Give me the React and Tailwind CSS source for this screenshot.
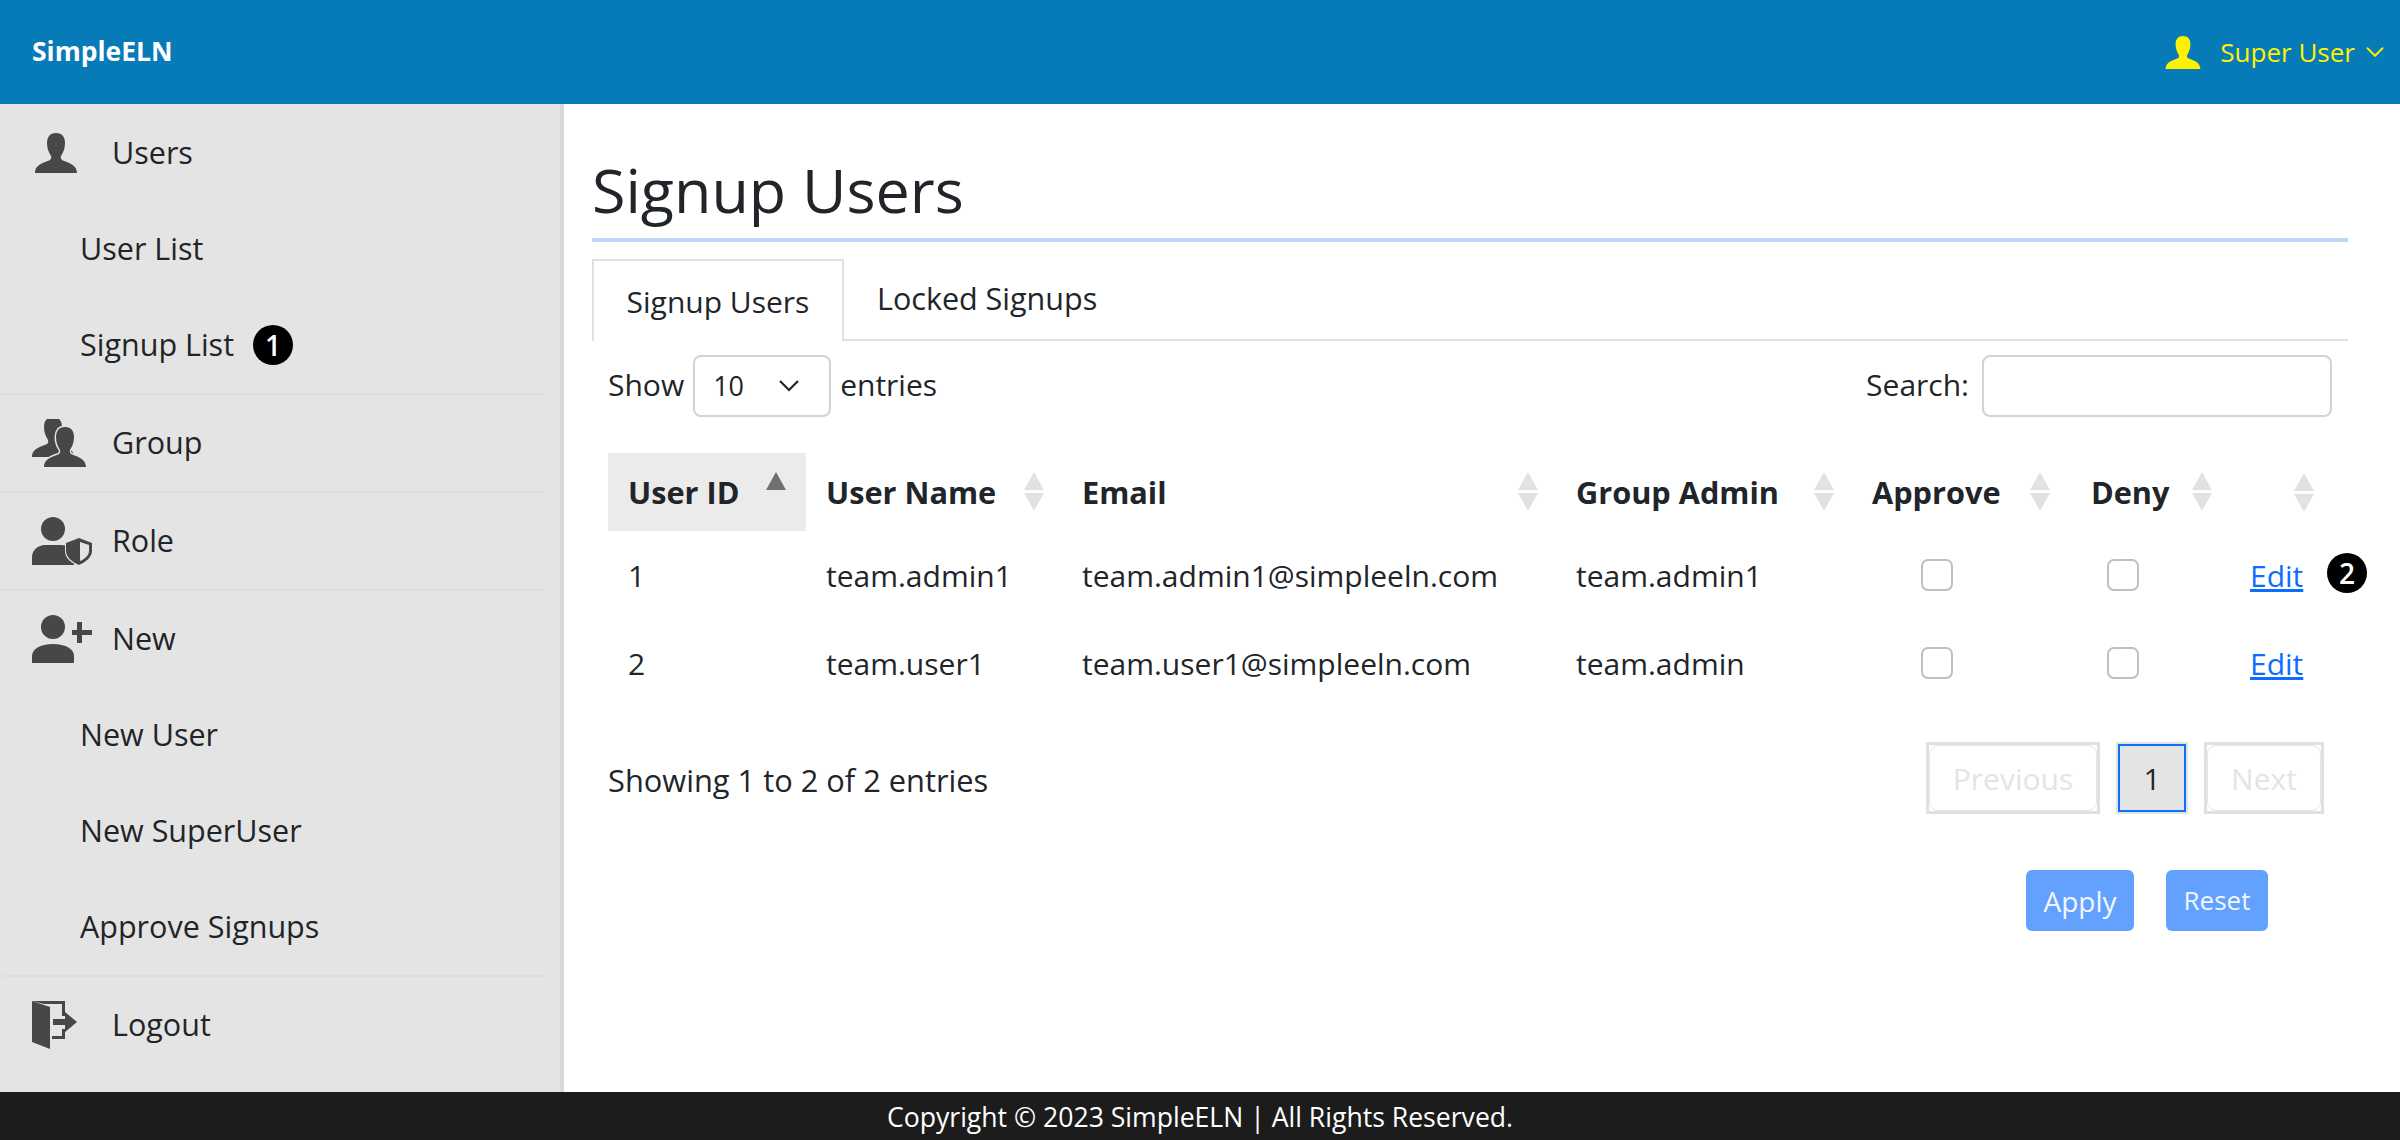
import React from 'react';
import { ChevronDown } from 'lucide-react';

const personPath = 'M21 0c-6 0-9 4-9 10 0 5 1.500 9 3.500 12 1 1.500 1 3.500 0 4.500C13 29 0 30 0 40h42c0-10-13-11-15.500-13.500-1-1-1-3 0-4.500C28.500 19 30 15 30 10 30 4 27 0 21 0z';

const PersonIcon = ({ className }) => (
  <svg viewBox="0 0 42 40" className={className} fill="currentColor">
    <path d={personPath} />
  </svg>
);

const GroupIcon = ({ className }) => (
  <svg viewBox="0 0 54 48" className={className} fill="currentColor">
    <path d={personPath} transform="translate(0 -2)" />
    <path d={personPath} transform="translate(12 8)" stroke="#e4e4e4" strokeWidth="3" paintOrder="stroke" />
  </svg>
);

const RoleIcon = ({ className }) => (
  <svg viewBox="0 0 60 48" className={className} fill="currentColor">
    <circle cx="21" cy="12" r="12" />
    <path d="M0 48v-8c0-7 6-12 13-12h16c6 0 11 3 13 8v12z" />
    <path d="M47 20l14 5v9c0 7-6 12-14 15-8-3-14-8-14-15v-9z" fill="#e4e4e4" />
    <path fillRule="evenodd" d="M47 21l13 5v8c0 6-6 11-13 14-7-3-13-8-13-14v-8zm1 4v19c5-2 9-6 9-10v-6z" />
  </svg>
);

const AddUserIcon = ({ className }) => (
  <svg viewBox="0 0 60 48" className={className} fill="currentColor">
    <circle cx="21" cy="12" r="12" />
    <path d="M0 48v-7c0-7 8-12 21-12s21 5 21 12v7z" />
    <path d="M45 7h5v8h10v5H50v8h-5v-8H40v-5h5z" />
  </svg>
);

const LogoutIcon = ({ className }) => (
  <svg viewBox="0 0 45 48" className={className} fill="currentColor">
    <path d="M0 0h33v15h-3V3H12z" />
    <path d="M0 0l18 6v42L0 41z" />
    <path d="M20 35h10v-7h3v10H20z" />
    <path d="M21 18h12v-7l12 10-12 10v-7H21z" />
  </svg>
);

const Caret = () => (
  <svg viewBox="0 0 20 12" className="w-[20px] h-[12px]" fill="none" stroke="currentColor" strokeWidth="2.200">
    <path d="M1 1l9 9 9-9" />
  </svg>
);

const SortArrows = ({ active }) => (
  <span className="flex flex-col gap-[3px]">
    <span className={`w-0 h-0 border-l-[10px] border-r-[10px] border-b-[18px] border-l-transparent border-r-transparent ${active ? 'border-b-[#707070]' : 'border-b-[#e2e2e2]'}`} />
    <span className={`w-0 h-0 border-l-[10px] border-r-[10px] border-t-[18px] border-l-transparent border-r-transparent ${active ? 'border-t-transparent' : 'border-t-[#e2e2e2]'}`} />
  </span>
);

const Badge = ({ n }) => (
  <span className="w-[40px] h-[40px] rounded-full bg-black text-white flex items-center justify-center text-[28px] font-semibold leading-none">
    {n}
  </span>
);

const MainItem = ({ icon: Icon, iconClass, label, h = 'h-[96px]' }) => (
  <div className={`${h} flex items-center`}>
    <span className="w-[112px] pl-[32px] shrink-0 text-[#474747]">
      <Icon className={iconClass} />
    </span>
    <span>{label}</span>
  </div>
);

const SubItem = ({ label, badge }) => (
  <div className="h-[96px] flex items-center pl-[80px] gap-[19px]">
    <span>{label}</span>
    {badge && <Badge n={badge} />}
  </div>
);

const Divider = () => <div className="h-[2px] w-[544px] ml-[2px] bg-[#dedede]" />;

const headers = [
  { label: 'User ID', w: 'w-[198px]', pr: 'pr-[20px]', active: true },
  { label: 'User Name', w: 'w-[256px]', pr: 'pr-[18px]' },
  { label: 'Email', w: 'w-[494px]', pr: 'pr-[18px]' },
  { label: 'Group Admin', w: 'w-[296px]', pr: 'pr-[18px]' },
  { label: 'Approve', w: 'w-[219px]', pr: 'pr-[21px]' },
  { label: 'Deny', w: 'w-[159px]', pr: 'pr-[18px]' },
  { label: '', w: 'w-[101px]', pr: 'pr-[17px]' },
];

const rows = [
  { id: 1, name: 'team.admin1', email: 'team.admin1@simpleeln.com', admin: 'team.admin1', badge: 2 },
  { id: 2, name: 'team.user1', email: 'team.user1@simpleeln.com', admin: 'team.admin' },
];

const Check = () => (
  <span className="block mx-auto w-[32px] h-[32px] rounded-[7px] border-2 border-[#bfbfbf] bg-white" />
);

const PageButton = ({ w, label }) => (
  <span className={`${w} h-[72px] border-[3px] border-[#dee0e3]`}>
    <span className="w-full h-full flex items-center justify-center rounded-[9px] border border-[#e6e7e9] text-[#e4e4e4]">
      {label}
    </span>
  </span>
);

export default function App() {
  return (
    <div className="w-[2400px] h-[1140px] flex flex-col overflow-hidden bg-white text-[#212529] text-[30px] font-['Open_Sans',sans-serif]">
      <header className="h-[104px] shrink-0 bg-[#077bb8] flex items-center justify-between pl-[32px] pr-[10px]">
        <span className="text-white font-bold text-[26.5px]">SimpleELN</span>
        <div className="flex items-center text-[#fff200] text-[26px]">
          <PersonIcon className="w-[36px] h-[33px] mr-[19px]" />
          <span>Super User</span>
          <ChevronDown className="w-[30px] h-[30px] ml-[5px]" strokeWidth={1.500} />
        </div>
      </header>

      <div className="flex-1 flex min-h-0">
        <aside className="w-[564px] shrink-0 bg-[#e4e4e4] border-r-4 border-[#d8d8d8] text-[30.5px]">
          <MainItem icon={PersonIcon} iconClass="w-[42px] h-[40px] ml-[3px]" label="Users" h="h-[97px]" />
          <SubItem label="User List" />
          <SubItem label="Signup List" badge={1} />
          <Divider />
          <MainItem icon={GroupIcon} iconClass="w-[54px] h-[48px]" label="Group" />
          <Divider />
          <MainItem icon={RoleIcon} iconClass="w-[60px] h-[48px]" label="Role" />
          <Divider />
          <MainItem icon={AddUserIcon} iconClass="w-[60px] h-[48px]" label="New" />
          <SubItem label="New User" />
          <SubItem label="New SuperUser" />
          <SubItem label="Approve Signups" />
          <Divider />
          <MainItem icon={LogoutIcon} iconClass="w-[45px] h-[48px]" label="Logout" />
        </aside>

        <main className="flex-1 pl-[28px] pr-[52px] min-w-0">
          <h1 className="text-[61px] leading-none pt-[55px] pb-[18px] border-b-4 border-[#bfd7fb]">
            Signup Users
          </h1>

          <div className="mt-[17px] flex border-b-2 border-[#dee2e6] h-[82px]">
            <div className="w-[252px] h-[82px] flex items-center justify-center border-2 border-b-0 border-[#dee2e6] bg-white">
              Signup Users
            </div>
            <div className="pl-[33px] flex items-center pb-[1px] text-[30.5px]">Locked Signups</div>
          </div>

          <div className="pl-[16px] pr-[16px]">
            <div className="mt-[14px] flex items-center justify-between">
              <div className="flex items-center">
                <span className="pb-[3px]">Show</span>
                <span className="ml-[9px] w-[138px] h-[62px] rounded-[8px] border-2 border-[#ced4da] flex items-center justify-between pl-[18px] pr-[30px] text-[27px]">
                  10
                  <Caret />
                </span>
                <span className="ml-[9px] pb-[3px]">entries</span>
              </div>
              <div className="flex items-center">
                <span className="pb-[3px]">Search:</span>
                <span className="ml-[13px] w-[350px] h-[62px] rounded-[8px] border-2 border-[#ced4da] bg-white" />
              </div>
            </div>

            <table className="mt-[36px] w-[1723px] table-fixed border-collapse">
              <thead>
                <tr className="h-[78px]">
                  {headers.map((h, i) => (
                    <th key={i} className={`${h.w} p-0 font-bold text-left text-[30.7px] ${h.active ? 'bg-[#ebebeb]' : ''}`}>
                      <div className={`flex items-center justify-between pl-[20px] ${h.pr}`}>
                        <span>{h.label}</span>
                        <SortArrows active={h.active} />
                      </div>
                    </th>
                  ))}
                </tr>
              </thead>
              <tbody>
                {rows.map((r) => (
                  <tr key={r.id} className="h-[88px]">
                    <td className="pl-[20px]">{r.id}</td>
                    <td className="pl-[20px]">{r.name}</td>
                    <td className="pl-[20px]">{r.email}</td>
                    <td className="pl-[20px]">{r.admin}</td>
                    <td className="pr-[50px]"><Check /></td>
                    <td className="pr-[56px]"><Check /></td>
                    <td className="pl-[20px] relative">
                      <a className="text-[#0d6efd] underline">Edit</a>
                      {r.badge && (
                        <span className="absolute left-[97px] top-[22px]"><Badge n={r.badge} /></span>
                      )}
                    </td>
                  </tr>
                ))}
              </tbody>
            </table>

            <div className="mt-[35px] flex items-center justify-between">
              <span className="text-[30.8px] pt-[5px]">Showing 1 to 2 of 2 entries</span>
              <div className="flex items-center mr-[8px] gap-[16px]">
                <PageButton w="w-[174px]" label="Previous" />
                <span className="w-[72px] h-[72px] border-2 border-[#e2e3e5]">
                  <span className="w-full h-full flex items-center justify-center border-2 border-[#0d6efd] bg-[#e4e4e4]">1</span>
                </span>
                <PageButton w="w-[120px]" label="Next" />
              </div>
            </div>

            <div className="mt-[56px] flex justify-end gap-[32px] pr-[64px]">
              <button className="w-[108px] h-[61px] rounded-[6px] bg-[#62a1fd] text-[#f2f6ff] text-[28px]">Apply</button>
              <button className="w-[102px] h-[61px] rounded-[6px] bg-[#62a1fd] text-[#f2f6ff] text-[26px]">Reset</button>
            </div>
          </div>
        </main>
      </div>

      <footer className="h-[48px] shrink-0 bg-[#1c1c1c] text-white text-[26.6px] pt-[3px] flex items-center justify-center">
        Copyright © 2023 SimpleELN | All Rights Reserved.
      </footer>
    </div>
  );
}
